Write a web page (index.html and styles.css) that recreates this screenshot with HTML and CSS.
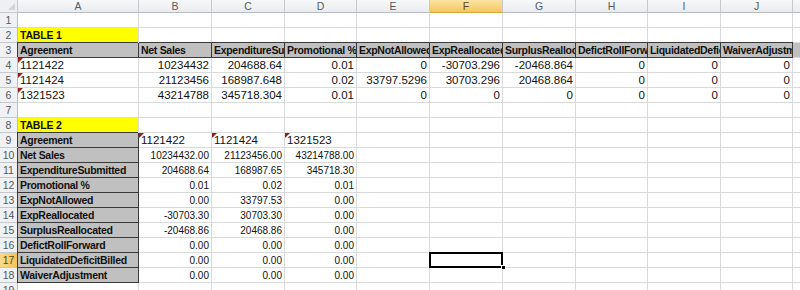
FILE: index.html
```html
<!DOCTYPE html>
<html>
<head>
  <meta charset="UTF-8">
  <title>Book1 - Sheet1</title>
  <link rel="stylesheet" href="styles.css">
</head>
<body>
  <div class="sheet">
    <!-- column headers -->
    <div class="corner"></div><div class="ch">A</div><div class="ch">B</div><div class="ch">C</div><div class="ch">D</div><div class="ch">E</div><div class="ch on">F</div><div class="ch">G</div><div class="ch">H</div><div class="ch">I</div><div class="ch">J</div><div class="ch"></div>

    <div class="rh">1</div><div class="c"></div><div class="c"></div><div class="c"></div><div class="c"></div><div class="c"></div><div class="c"></div><div class="c"></div><div class="c"></div><div class="c"></div><div class="c"></div><div class="c"></div>
    <div class="rh">2</div><div class="c yel">TABLE 1</div><div class="c"></div><div class="c"></div><div class="c"></div><div class="c"></div><div class="c"></div><div class="c"></div><div class="c"></div><div class="c"></div><div class="c"></div><div class="c"></div>
    <div class="rh">3</div><div class="c hd first">Agreement</div><div class="c hd">Net Sales</div><div class="c hd">ExpenditureSubmitted</div><div class="c hd">Promotional %</div><div class="c hd">ExpNotAllowed</div><div class="c hd">ExpReallocated</div><div class="c hd">SurplusReallocated</div><div class="c hd">DefictRollForward</div><div class="c hd">LiquidatedDeficitBilled</div><div class="c hd">WaiverAdjustment</div><div class="c grey"></div>
    <div class="rh">4</div><div class="c tri">1121422</div><div class="c num">10234432</div><div class="c num">204688.64</div><div class="c num">0.01</div><div class="c num">0</div><div class="c num">-30703.296</div><div class="c num">-20468.864</div><div class="c num">0</div><div class="c num">0</div><div class="c num">0</div><div class="c"></div>
    <div class="rh">5</div><div class="c tri">1121424</div><div class="c num">21123456</div><div class="c num">168987.648</div><div class="c num">0.02</div><div class="c num">33797.5296</div><div class="c num">30703.296</div><div class="c num">20468.864</div><div class="c num">0</div><div class="c num">0</div><div class="c num">0</div><div class="c"></div>
    <div class="rh">6</div><div class="c tri">1321523</div><div class="c num">43214788</div><div class="c num">345718.304</div><div class="c num">0.01</div><div class="c num">0</div><div class="c num">0</div><div class="c num">0</div><div class="c num">0</div><div class="c num">0</div><div class="c num">0</div><div class="c"></div>
    <div class="rh">7</div><div class="c"></div><div class="c"></div><div class="c"></div><div class="c"></div><div class="c"></div><div class="c"></div><div class="c"></div><div class="c"></div><div class="c"></div><div class="c"></div><div class="c"></div>
    <div class="rh">8</div><div class="c yel">TABLE 2</div><div class="c"></div><div class="c"></div><div class="c"></div><div class="c"></div><div class="c"></div><div class="c"></div><div class="c"></div><div class="c"></div><div class="c"></div><div class="c"></div>
    <div class="rh">9</div><div class="c lbl top">Agreement</div><div class="c tri">1121422</div><div class="c tri">1121424</div><div class="c tri">1321523</div><div class="c"></div><div class="c"></div><div class="c"></div><div class="c"></div><div class="c"></div><div class="c"></div><div class="c"></div>
    <div class="rh">10</div><div class="c lbl">Net Sales</div><div class="c num sm">10234432.00</div><div class="c num sm">21123456.00</div><div class="c num sm">43214788.00</div><div class="c"></div><div class="c"></div><div class="c"></div><div class="c"></div><div class="c"></div><div class="c"></div><div class="c"></div>
    <div class="rh">11</div><div class="c lbl">ExpenditureSubmitted</div><div class="c num sm">204688.64</div><div class="c num sm">168987.65</div><div class="c num sm">345718.30</div><div class="c"></div><div class="c"></div><div class="c"></div><div class="c"></div><div class="c"></div><div class="c"></div><div class="c"></div>
    <div class="rh">12</div><div class="c lbl">Promotional %</div><div class="c num sm">0.01</div><div class="c num sm">0.02</div><div class="c num sm">0.01</div><div class="c"></div><div class="c"></div><div class="c"></div><div class="c"></div><div class="c"></div><div class="c"></div><div class="c"></div>
    <div class="rh">13</div><div class="c lbl">ExpNotAllowed</div><div class="c num sm">0.00</div><div class="c num sm">33797.53</div><div class="c num sm">0.00</div><div class="c"></div><div class="c"></div><div class="c"></div><div class="c"></div><div class="c"></div><div class="c"></div><div class="c"></div>
    <div class="rh">14</div><div class="c lbl">ExpReallocated</div><div class="c num sm">-30703.30</div><div class="c num sm">30703.30</div><div class="c num sm">0.00</div><div class="c"></div><div class="c"></div><div class="c"></div><div class="c"></div><div class="c"></div><div class="c"></div><div class="c"></div>
    <div class="rh">15</div><div class="c lbl">SurplusReallocated</div><div class="c num sm">-20468.86</div><div class="c num sm">20468.86</div><div class="c num sm">0.00</div><div class="c"></div><div class="c"></div><div class="c"></div><div class="c"></div><div class="c"></div><div class="c"></div><div class="c"></div>
    <div class="rh">16</div><div class="c lbl">DefictRollForward</div><div class="c num sm">0.00</div><div class="c num sm">0.00</div><div class="c num sm">0.00</div><div class="c"></div><div class="c"></div><div class="c"></div><div class="c"></div><div class="c"></div><div class="c"></div><div class="c"></div>
    <div class="rh on">17</div><div class="c lbl">LiquidatedDeficitBilled</div><div class="c num sm">0.00</div><div class="c num sm">0.00</div><div class="c num sm">0.00</div><div class="c"></div><div class="c sel"></div><div class="c"></div><div class="c"></div><div class="c"></div><div class="c"></div><div class="c"></div>
    <div class="rh">18</div><div class="c lbl">WaiverAdjustment</div><div class="c num sm">0.00</div><div class="c num sm">0.00</div><div class="c num sm">0.00</div><div class="c"></div><div class="c"></div><div class="c"></div><div class="c"></div><div class="c"></div><div class="c"></div><div class="c"></div>
    <div class="rh">19</div><div class="c"></div><div class="c"></div><div class="c"></div><div class="c"></div><div class="c"></div><div class="c"></div><div class="c"></div><div class="c"></div><div class="c"></div><div class="c"></div><div class="c"></div>
  </div>
</body>
</html>
```

FILE: styles.css
```css
:root {
  --grid: #d9dadc;
  --head-line: #c6c8cb;
  --dark: #3a3a3a;
  --label: #c0c0c0;
}

body {
  margin: 0;
  background: #fff;
  font-family: 'Liberation Sans', Arial, sans-serif;
  font-size: 11.5px;
  color: #111;
  overflow: hidden;
}

.sheet {
  display: grid;
  grid-template-columns: 18px 121px 73px 73px 72px 73px 73px 73px 72px 73px 72px 40px;
  grid-template-rows: 13px;
  grid-auto-rows: 15px;
  width: 833px;
}

.sheet > div {
  box-sizing: border-box;
  white-space: nowrap;
  overflow: hidden;
}

/* headers */
.corner {
  background: #eef0f2;
  border-right: 1px solid var(--head-line);
  border-bottom: 1px solid var(--head-line);
  position: relative;
}

.corner::after {
  content: "";
  position: absolute;
  right: 2px;
  bottom: 2px;
  border-left: 7px solid transparent;
  border-bottom: 7px solid #d3d6d9;
}

.ch {
  background: linear-gradient(#f7f8f9, #e9ebee);
  border-right: 1px solid var(--head-line);
  border-bottom: 1px solid #b9bcc0;
  text-align: center;
  font-size: 10.5px;
  line-height: 12px;
  color: #555b62;
}

.ch.on {
  background: linear-gradient(#fbe3a4, #f4c75e);
  border-bottom-color: #d9a63a;
  color: #5c4818;
}

.rh {
  background: #eff1f3;
  border-right: 1px solid #b9bcc0;
  border-bottom: 1px solid var(--head-line);
  text-align: center;
  font-size: 10.5px;
  line-height: 15px;
  color: #55595e;
}

.rh.on {
  background: linear-gradient(90deg, #f9d98d, #f3c35c);
  color: #5c4818;
}

/* cells */
.c {
  border-right: 1px solid var(--grid);
  border-bottom: 1px solid var(--grid);
  padding: 0 2px;
  line-height: 15px;
  position: relative;
}

.num {
  text-align: right;
}

.num.sm {
  font-size: 10px;
}

.yel {
  background: #ffff00;
  font-weight: bold;
  font-size: 10.5px;
  letter-spacing: -0.2px;
}

.hd {
  background: var(--label);
  border-right-color: var(--dark);
  border-bottom-color: var(--dark);
  box-shadow: 0 -1px 0 var(--dark);
  font-weight: bold;
  font-size: 10.5px;
  letter-spacing: -0.3px;
}

.hd.first {
  box-shadow: -1px -1px 0 var(--dark);
}

.grey {
  background: var(--label);
}

.lbl {
  background: var(--label);
  border-right-color: var(--dark);
  border-bottom-color: var(--dark);
  box-shadow: -1px 0 0 var(--dark);
  font-weight: bold;
  font-size: 10.5px;
  letter-spacing: -0.3px;
}

.lbl.top {
  box-shadow: -1px -1px 0 var(--dark);
}

/* number-stored-as-text marker */
.tri::before {
  content: "";
  position: absolute;
  left: 0;
  top: 0;
  border-top: 5px solid #9b1b1b;
  border-right: 5px solid transparent;
}

/* active cell */
.sheet > .sel {
  overflow: visible;
}

.sel::after {
  content: "";
  position: absolute;
  left: -1px;
  top: -1px;
  width: 74px;
  height: 16px;
  box-sizing: border-box;
  border: 2px solid #000;
}

.sel::before {
  content: "";
  position: absolute;
  right: -4px;
  bottom: -3px;
  width: 5px;
  height: 5px;
  background: #000;
  border: 1px solid #fff;
  box-sizing: border-box;
  z-index: 2;
}
```
